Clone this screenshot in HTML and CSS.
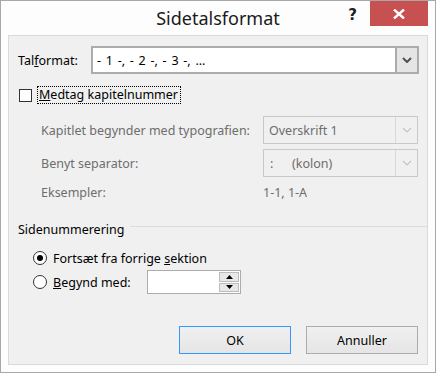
FILE: index.html
```html
<!DOCTYPE html>
<html>
<head>
<meta charset="utf-8">
<link rel="stylesheet" href="styles.css">
</head>
<body>
<div class="window">
  <div class="titlebar">
    <div class="title">Sidetalsformat</div>
    <div class="controls">
      <span class="help">?</span>
      <span class="close"><svg width="12" height="10" viewBox="0 0 12 10"><path d="M1 0.5 L11 9.5 M11 0.5 L1 9.5" stroke="#fff" stroke-width="2.4"/></svg></span>
    </div>
  </div>
  <div class="panel">
    <div class="row-format">
      <label class="lbl-format">Tal<u>f</u>ormat:</label>
      <div class="combo combo-main">
        <div class="combo-text main-text">- 1 -, - 2 -, - 3 -, ...</div>
        <div class="combo-btn"><svg width="10" height="6" viewBox="0 0 10 6"><path d="M1 1 L5 5 L9 1" fill="none" stroke="#505050" stroke-width="2"/></svg></div>
      </div>
    </div>
    <div class="row-check">
      <span class="checkbox"></span>
      <span class="focus"><u>M</u>edtag kapitelnummer</span>
    </div>
    <div class="disabled-grid">
      <div class="dlabel">Kapitlet begynder med typografien:</div>
      <div class="combo combo-dis">
        <div class="combo-text">Overskrift 1</div>
        <div class="combo-btn"><svg width="10" height="6" viewBox="0 0 10 6"><path d="M1 1 L5 5 L9 1" fill="none" stroke="#c4c4c4" stroke-width="1.2"/></svg></div>
      </div>
      <div class="dlabel">Benyt separator:</div>
      <div class="combo combo-dis">
        <div class="combo-text"><span class="colon">:</span>(kolon)</div>
        <div class="combo-btn"><svg width="10" height="6" viewBox="0 0 10 6"><path d="M1 1 L5 5 L9 1" fill="none" stroke="#c4c4c4" stroke-width="1.2"/></svg></div>
      </div>
      <div class="dlabel">Eksempler:</div>
      <div class="dlabel">1-1, 1-A</div>
    </div>
    <div class="group-head">
      <span>Sidenummerering</span>
      <span class="rule"></span>
    </div>
    <div class="radio-row r1">
      <span class="radio checked"></span>
      <span>Fortsæt fra forrige <u>s</u>ektion</span>
    </div>
    <div class="radio-row r2">
      <span class="radio"></span>
      <span class="begynd"><u>B</u>egynd med:</span>
      <div class="spin">
        <div class="spin-field"></div>
        <div class="spin-btns">
          <div class="sbtn"><svg width="7" height="4" viewBox="0 0 7 4"><path d="M0 4 L3.5 0 L7 4 Z" fill="#000"/></svg></div>
          <div class="sbtn"><svg width="7" height="4" viewBox="0 0 7 4"><path d="M0 0 L3.5 4 L7 0 Z" fill="#000"/></svg></div>
        </div>
      </div>
    </div>
    <div class="buttons">
      <button class="btn btn-ok">OK</button>
      <button class="btn">Annuller</button>
    </div>
  </div>
</div>
</body>
</html>
```
FILE: styles.css
```css
* { box-sizing: border-box; }
html, body { margin: 0; padding: 0; background: #fff; }
body {
  font-family: "Noto Sans", "Open Sans", sans-serif;
  font-size: 12.5px;
  color: #000;
}
.window {
  width: 436px;
  height: 373px;
  border: 1px solid #a8a8a8;
  background: #fdfdfd;
  display: flex;
  flex-direction: column;
  padding: 0 7px 7px 7px;
}
.titlebar {
  height: 34px;
  display: flex;
  position: relative;
}
.title {
  flex: 1;
  text-align: center;
  font-size: 18px;
  line-height: 34px;
  color: #1a1a1a;
}
.controls {
  position: absolute;
  right: 0;
  top: 0;
  display: flex;
  align-items: flex-start;
}
.help {
  font-family: "DejaVu Sans", sans-serif;
  font-weight: bold;
  font-size: 15px;
  line-height: 16px;
  margin-top: 6px;
  margin-right: 13px;
  color: #1e1e1e;
}
.close {
  width: 58px;
  height: 25px;
  background: #c75050;
  display: flex;
  align-items: center;
  justify-content: center;
}
.panel {
  flex: 1;
  background: #f0f0f0;
  border: 1px solid #dadada;
  padding: 10px 8px 10px 9px;
  display: flex;
  flex-direction: column;
}
.row-format {
  display: flex;
  align-items: center;
  height: 28px;
}
.lbl-format { width: 73px; }
.combo {
  flex: 1;
  height: 28px;
  display: flex;
  background: #fff;
}
.combo-main {
  border: 2px solid #acacac;
}
.combo-text {
  flex: 1;
  padding-left: 4px;
  display: flex;
  align-items: center;
  white-space: pre;
}
.main-text { word-spacing: 1.5px; }
.combo-btn {
  width: 22px;
  display: flex;
  align-items: center;
  justify-content: center;
}
.combo-main .combo-btn {
  background: #e5e5e5;
  border: 2px solid #acacac;
  margin: -2px -2px -2px 0;
  width: 24px;
}
.row-check {
  display: flex;
  align-items: center;
  margin-top: 12px;
  height: 18px;
}
.checkbox {
  width: 13px;
  height: 13px;
  border: 1px solid #333;
  background: #fff;
  margin-left: 1px;
  margin-right: 5px;
}
.focus {
  border: 1px dotted #000;
  height: 18px;
  line-height: 16px;
  padding: 0 2px 0 1px;
}
.disabled-grid {
  display: grid;
  grid-template-columns: 222px 155px;
  grid-template-rows: 28px 29px 18px;
  row-gap: 5px;
  margin-top: 12px;
  margin-left: 23px;
  color: #6d6d6d;
}
.dlabel {
  display: flex;
  align-items: center;
}
.combo-dis {
  border: 1px solid #c9c9c9;
  background: #f0f0f0;
  color: #6d6d6d;
}
.combo-dis .combo-btn {
  border-left: 1px solid #d9d9d9;
  width: 22px;
}
.combo-dis .combo-text { padding-left: 5px; }
.colon { display: inline-block; width: 23px; padding-left: 1px; }
.group-head {
  display: flex;
  align-items: center;
  margin-top: 20px;
  height: 16px;
  margin-right: -8px;
}
.group-head .rule {
  flex: 1;
  height: 1px;
  background: #dcdcdc;
  margin-left: 6px;
  margin-top: -5px;
}
.radio-row {
  display: flex;
  align-items: center;
  margin-left: 15px;
  height: 18px;
}
.r1 { margin-top: 12px; }
.r2 { margin-top: 3px; height: 24px; }
.radio {
  width: 14px;
  height: 14px;
  border: 1px solid #333;
  border-radius: 50%;
  background: #fff;
  margin-right: 6px;
  display: flex;
  align-items: center;
  justify-content: center;
}
.radio.checked::after {
  content: "";
  width: 6px;
  height: 6px;
  border-radius: 50%;
  background: #000;
}
.begynd { width: 94px; }
.spin {
  width: 94px;
  height: 24px;
  border: 1px solid #acacac;
  background: #fff;
  display: flex;
}
.spin-field { flex: 1; }
.spin-btns {
  width: 21px;
  display: flex;
  flex-direction: column;
  padding: 1px 1px 1px 0;
  gap: 1px;
}
.sbtn {
  flex: 1;
  background: #e8e8e8;
  border: 1px solid #bcbcbc;
  display: flex;
  align-items: center;
  justify-content: center;
}
.buttons {
  margin-top: auto;
  display: flex;
  justify-content: flex-end;
  gap: 15px;
  padding-right: 1px;
}
.btn {
  width: 112px;
  height: 28px;
  font-family: inherit;
  font-size: 12.5px;
  color: #000;
  border: 1px solid #acacac;
  background: linear-gradient(#f0f0f0, #e5e5e5);
  padding: 0;
}
.btn-ok {
  border-color: #3399ff;
}
u { text-decoration: underline; text-underline-offset: 1px; }
```
